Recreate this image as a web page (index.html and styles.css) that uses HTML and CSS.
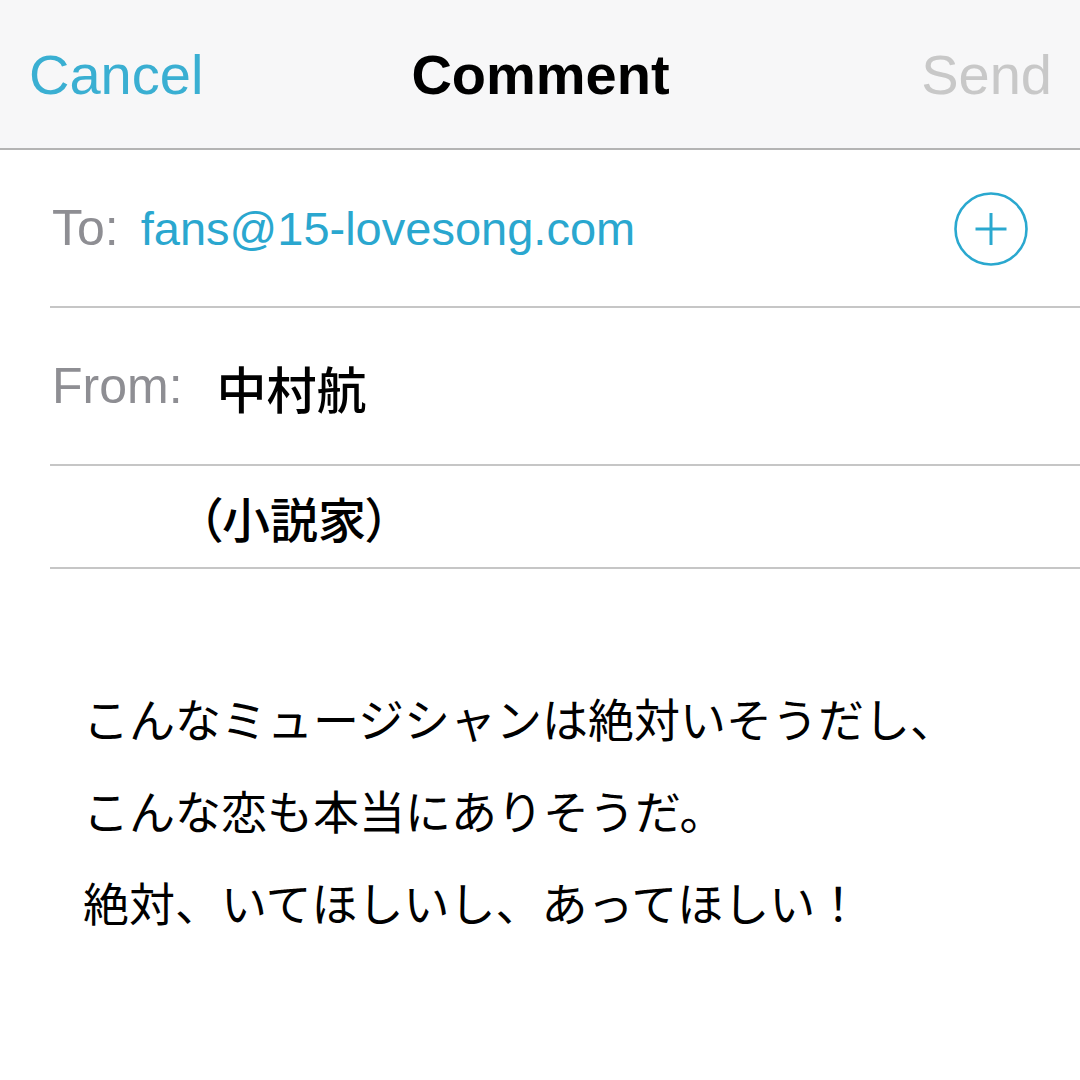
FILE: index.html
```html
<!DOCTYPE html>
<html lang="ja">
<head>
    <meta charset="UTF-8">
    <meta name="viewport" content="width=device-width, initial-scale=1.0">
    <title>Comment</title>
    <link rel="stylesheet" href="styles.css">
</head>
<body>
    <!-- Top navigation bar -->
    <header class="nav">
        <span class="nav-cancel">Cancel</span>
        <span class="nav-title">Comment</span>
        <span class="nav-send">Send</span>
    </header>

    <!-- Address fields -->
    <div class="fields">
        <div class="row row-to">
            <span class="label">To:</span>
            <span class="address">fans@15-lovesong.com</span>
            <svg class="add-btn" width="76" height="76" viewBox="0 0 76 76">
                <circle cx="38" cy="38" r="35.5" fill="none" stroke="#2aa8cf" stroke-width="2.6"/>
                <line x1="22.5" y1="38" x2="53.5" y2="38" stroke="#2aa8cf" stroke-width="3"/>
                <line x1="38" y1="22" x2="38" y2="54" stroke="#2aa8cf" stroke-width="3"/>
            </svg>
        </div>
        <div class="row row-from">
            <span class="label">From:</span>
            <span class="sender">中村航</span>
        </div>
        <div class="row row-extra">
            <span class="sender-note">（小説家）</span>
        </div>
    </div>

    <!-- Message body -->
    <div class="message">
        <p>こんなミュージシャンは絶対いそうだし、</p>
        <p>こんな恋も本当にありそうだ。</p>
        <p class="last">絶対、いてほしいし、あってほしい！</p>
    </div>
</body>
</html>
```

FILE: styles.css
```css
/* Mail compose style comment screen */
body {
    margin: 0;
    background: #fff;
    font-family: "Liberation Sans", Arial, "Noto Sans CJK JP", sans-serif;
    color: #000;
}

.nav {
    height: 148px;
    background: #f7f7f8;
    border-bottom: 2px solid #b4b4b4;
    display: grid;
    grid-template-columns: 1fr auto 1fr;
    align-items: center;
    padding: 0 28px 0 29px;
    font-size: 56px;
}

.nav-cancel {
    color: #3aafd2;
}

.nav-title {
    font-weight: bold;
    color: #000;
}

.nav-send {
    color: #c8c8c8;
    justify-self: end;
}

.fields {
    margin-left: 50px;
}

.row {
    display: flex;
    align-items: center;
    border-bottom: 2px solid #c6c6c6;
    padding-left: 2px;
}

.row-to {
    height: 156px;
    padding-right: 51px;
}

.row-from {
    height: 156px;
}

.row-extra {
    height: 101px;
}

.label {
    color: #8e8e93;
    font-size: 50px;
}

.address {
    color: #2aa7cf;
    font-size: 47px;
    margin-left: 22px;
}

.add-btn {
    margin-left: auto;
    margin-top: 2px;
}

.sender {
    font-family: "Noto Sans CJK JP", sans-serif;
    font-size: 50px;
    font-weight: 500;
    margin-left: 34px;
    margin-top: 2px;
}

.sender-note {
    font-family: "Noto Sans CJK JP", sans-serif;
    font-size: 48px;
    font-weight: 500;
    font-feature-settings: "palt";
    margin-left: 146px;
}

.message {
    padding: 102px 0 0 83px;
    font-family: "Noto Sans CJK JP", sans-serif;
    font-size: 46px;
    line-height: 92px;
}

.message p {
    margin: 0;
}
```
